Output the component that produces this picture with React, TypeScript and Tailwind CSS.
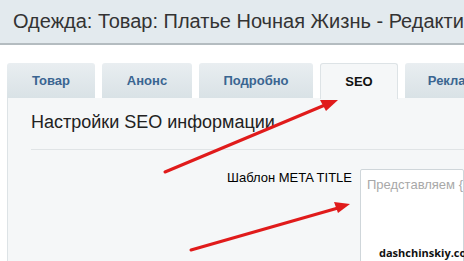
import React from "react";

export default function App() {
  const tabs = ["Товар", "Анонс", "Подробно", "SEO", "Реклама"];
  const widths = ["w-[88px]", "w-[90px]", "w-[114px]", "w-[78px]", "w-[100px]"];
  return (
    <div className="relative w-[464px] h-[261px] overflow-hidden bg-white" style={{ fontFamily: "Arial, 'Liberation Sans', sans-serif" }}>
      <div className="h-[45px] bg-[#e3eaee] border-b-2 border-[#b4bcc0] flex items-center pl-[13px] pb-[2px]">
        <span className="text-[20px] text-[#333] whitespace-nowrap leading-none">Одежда: Товар: Платье Ночная Жизнь - Редактирование</span>
      </div>
      <div className="pt-[18px] pl-[7px]">
        <div className="flex gap-[7px] h-[35px] items-stretch">
          {tabs.map((t, i) => {
            const active = t === "SEO";
            return (
              <div
                key={t}
                className={`${widths[i]} shrink-0 flex items-center justify-center rounded-t-[3px] text-[13px] font-bold ${
                  active
                    ? "bg-[#f5f7f8] border border-b-0 border-[#dde3e6] text-[#111] h-[36px]"
                    : "bg-gradient-to-b from-[#e9eef1] to-[#d9e2e6] text-[#3a6591]"
                }`}
                style={{ fontFamily: "'Liberation Sans', Tahoma, sans-serif" }}
              >
                <span>{t}</span>
              </div>
            );
          })}
        </div>
        <div className="bg-[#f5f7f8] border-l border-[#dde3e6] h-[200px] pl-[23px]">
          <div className="pt-[15px] h-[52px] text-[18px] text-[#222] border-b border-[#e0e4e6] leading-none">
            Настройки SEO информации
          </div>
          <div className="flex pt-[21px]">
            <div className="w-[329px] text-right pr-[8px] text-[13px] text-[#000] leading-none whitespace-nowrap">Шаблон META TITLE</div>
            <div className="flex-1 h-[100px] bg-white border border-[#cfd6da] rounded-[2px] -mt-[2px] pl-[6px] pt-[5px] text-[13px] text-[#a8a8a8] whitespace-nowrap overflow-hidden">
              Представляем {"{=this.Name}"}
            </div>
          </div>
        </div>
      </div>
      <div className="absolute left-[379px] top-[245px] text-[11px] font-bold text-[#111]" style={{ fontFamily: "'Open Sans', sans-serif" }}>
        dashchinskiy.com
      </div>
      <svg className="absolute left-0 top-0" width="464" height="261">
        <line x1="165" y1="172" x2="325" y2="105" stroke="#e01b1b" strokeWidth="3" strokeLinecap="round" />
        <polygon points="338,100 320,100 326,111" fill="#e01b1b" />
        <line x1="191" y1="250" x2="338" y2="208" stroke="#e01b1b" strokeWidth="3" strokeLinecap="round" />
        <polygon points="350,204 334,202 338,213" fill="#e01b1b" />
      </svg>
    </div>
  );
}
